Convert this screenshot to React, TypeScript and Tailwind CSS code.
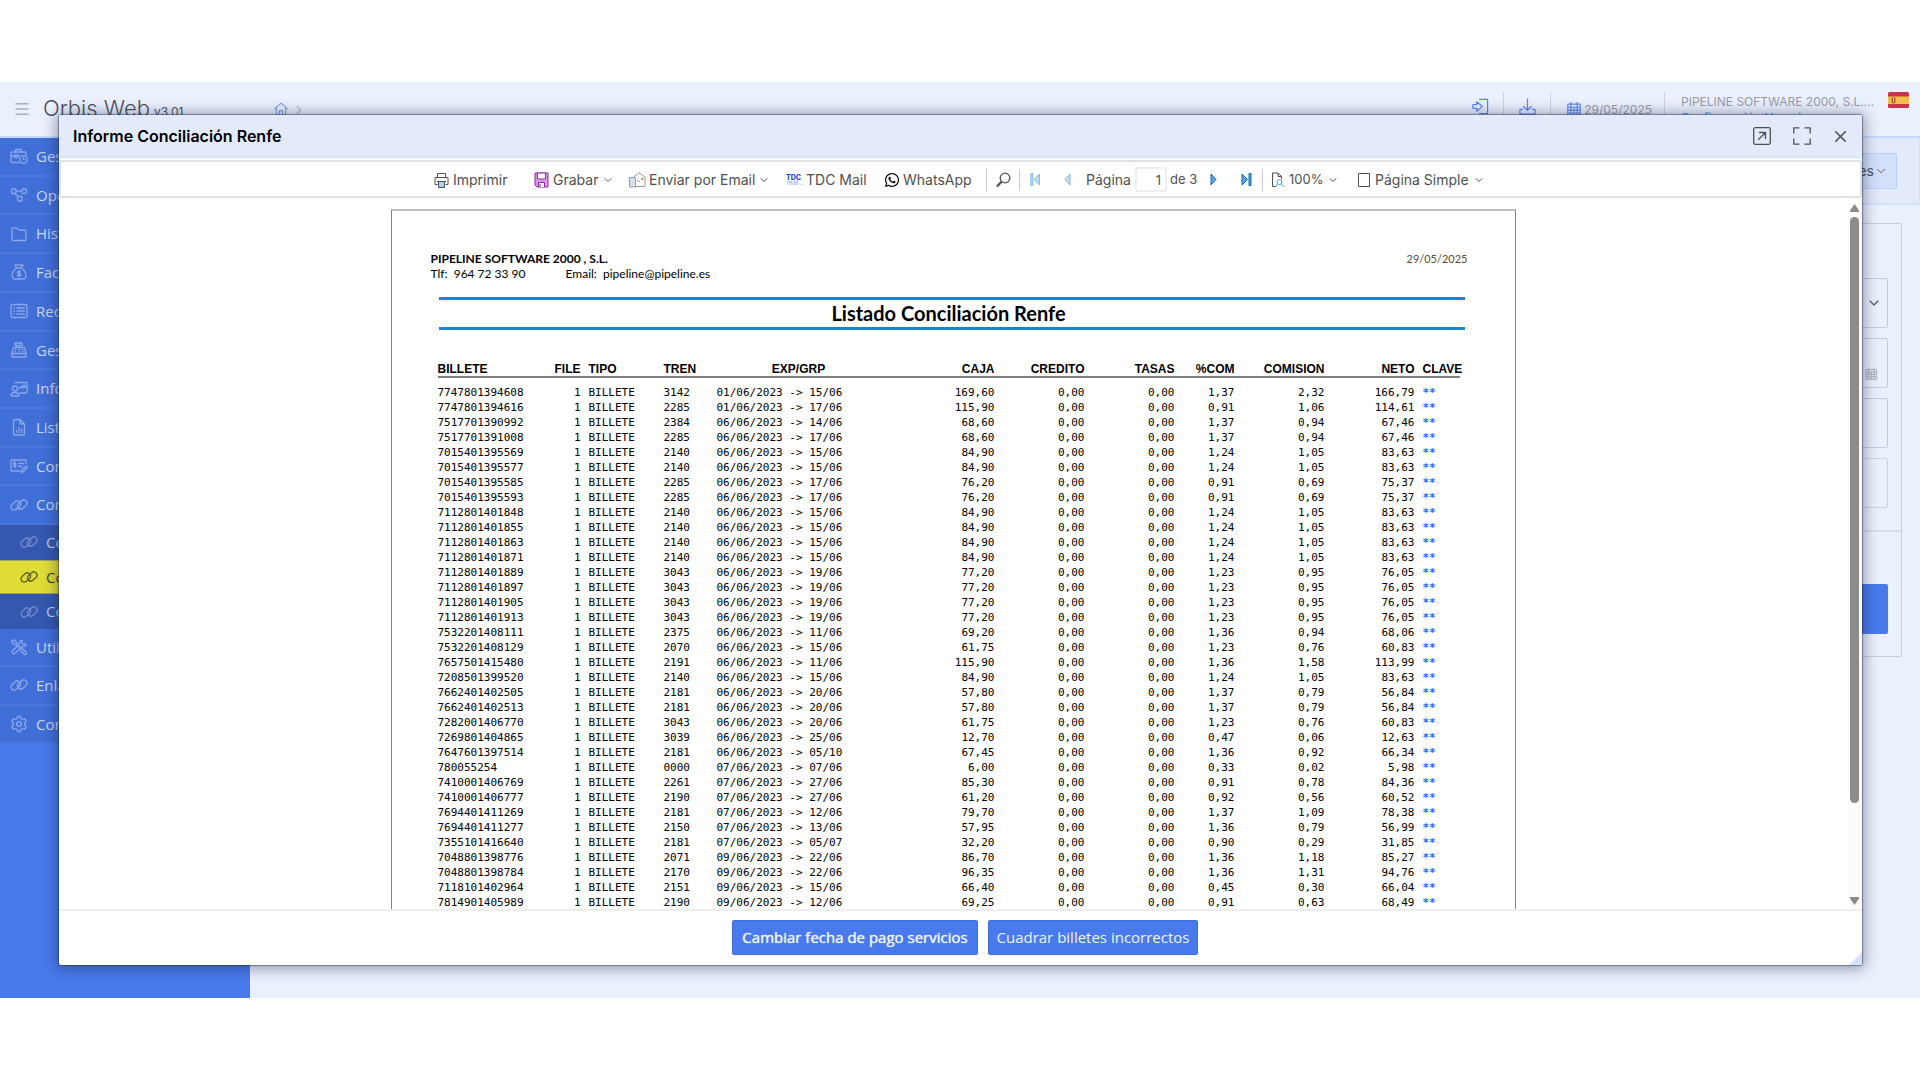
import type { ReactNode } from "react";
import { FaWhatsapp } from "react-icons/fa";
import { ChevronDown, ChevronRight, Menu, X } from "lucide-react";

/* ---------- iconos ---------- */

function Icon({ children, size = 18, className = "" }: { children: ReactNode; size?: number; className?: string }) {
  return (
    <svg
      width={size}
      height={size}
      viewBox="0 0 18 18"
      fill="none"
      stroke="currentColor"
      strokeWidth="1.3"
      strokeLinecap="round"
      strokeLinejoin="round"
      className={`shrink-0 ${className}`}
    >
      {children}
    </svg>
  );
}

const icons = {
  briefcase: (
    <>
      <path d="M9 15.5H2a1 1 0 0 1-1-1V6a1 1 0 0 1 1-1h13a1 1 0 0 1 1 1v2" />
      <path d="M5.5 5V3.5a1 1 0 0 1 1-1h4a1 1 0 0 1 1 1V5M1 9h4M8 9h2M5 8v2.500h2.500V8z" />
      <circle cx="13.5" cy="12.5" r="3.8" />
      <path d="M13.5 10.500v2.200h1.500" />
    </>
  ),
  nodes: (
    <>
      <rect x="1.5" y="3" width="4.5" height="4.5" rx="1" />
      <rect x="12" y="3" width="4.5" height="4.5" rx="1" />
      <rect x="7.5" y="10.5" width="4.5" height="4.5" rx="1" />
      <path d="M6 5.200h6M5 7.500l3 3" />
    </>
  ),
  folder: <path d="M2 4a1 1 0 0 1 1-1h4l2 2h6a1 1 0 0 1 1 1v8.500a1 1 0 0 1-1 1H3a1 1 0 0 1-1-1z" />,
  moneyBag: (
    <>
      <path d="M6.5 5 5 2h8l-1.500 3zM6.500 5C4 7 2 9.500 2 12.500 2 15 3.500 16 5.500 16h7c2 0 3.500-1 3.500-3.500C16 9.500 14 7 11.500 5z" />
      <path d="M10.7 9c-1-1-3.200-.8-3.200.5 0 1.500 3.300.8 3.300 2.300 0 1.300-2.400 1.500-3.400.4M9 7.700v6" />
    </>
  ),
  list: (
    <>
      <rect x="1" y="2.5" width="16" height="13" rx="1.5" />
      <path d="M7 6h7.500M7 9h7.500M7 12h7.500M4 6h.5M4 9h.5M4 12h.5" />
    </>
  ),
  register: (
    <>
      <path d="M2 12l1.500-5.500h11L16 12v4H2zM2 12.500h14M5 2h7v2.500H5zM7 4.500v2" />
      <path d="M5.5 8.500h.5M9 8.500h.5M12 8.500h.5M5 10.500h.5M9 10.500h.5M12.500 10.500h.5" />
    </>
  ),
  presenter: (
    <>
      <path d="M5 2.500h11a1 1 0 0 1 1 1V12a1 1 0 0 1-1 1H10" />
      <circle cx="5" cy="8.5" r="2.5" />
      <path d="M1 16c0-2.500 2-3.500 4-3.500s4 1 4 3.500zM9 8.500l2-2 1.500 1.500L15 5.500M12.800 5.500H15v2" />
    </>
  ),
  report: (
    <>
      <path d="M3.5 2.500a1 1 0 0 1 1-1H10l4.500 4.500v10a1 1 0 0 1-1 1h-9a1 1 0 0 1-1-1zM10 1.500V6h4.500" />
      <path d="M6.5 14.500v-2M9 14.500v-5M11.700 14.500V11" />
    </>
  ),
  cheque: (
    <>
      <path d="M10 14H2a1 1 0 0 1-1-1V4a1 1 0 0 1 1-1h13a1 1 0 0 1 1 1v2.500" />
      <path d="M5.800 6c-1-.7-2.300-.4-2.300.5 0 1.200 2.500.7 2.500 2s-1.600 1.300-2.500.6M4.700 5v5.500M8.500 6.500h5M8.500 9.500H12M11.500 15.500l.5-2.500 4-4 1.500 1.500-4 4z" />
    </>
  ),
  link: (
    <>
      <rect x="0.5" y="6.3" width="10.5" height="6.4" rx="3.2" transform="rotate(-42 5.8 9.5)" />
      <rect x="7" y="5.3" width="10.5" height="6.4" rx="3.2" transform="rotate(-42 12.3 8.5)" />
    </>
  ),
  tools: (
    <>
      <path d="M2 2.500 4 2l3 3-.5 1.500 5 5 1.500-.5 3.300 3.300c.8 1.200-.8 2.700-2 2L11 13l.5-1.500-5-5L5 7 2 4.500z" />
      <path d="M15.500 5.500 13.500 6.500l-1.800-1.700L12.500 2.500C10.500 2 8.800 4 9.500 6L2.500 12.700c-1.500 1.600.8 4 2.500 2.500L12 8.500c2.500.7 4.500-1 3.500-3z" />
    </>
  ),
  gear: (
    <>
      <path d="M7.500 1.500h3l.5 2 1.700 1 2-.6 1.500 2.600-1.500 1.500v2l1.500 1.500-1.500 2.600-2-.6-1.700 1-.5 2h-3l-.5-2-1.700-1-2 .6-1.500-2.600L3.300 10V8L1.800 6.500l1.500-2.600 2 .6 1.700-1z" />
      <circle cx="9" cy="9" r="2.3" />
    </>
  ),
  calendar: <path d="M2 3.500h14V17H2zM2 7h14M2 10.200h14M2 13.500h14M5.500 1.500v15.500M9 7v10M12.500 1.500v15.500" />,
};

type IconName = keyof typeof icons;

function TDCIcon() {
  return (
    <svg width="17" height="16" viewBox="0 0 17 16" className="shrink-0">
      <text x="0" y="8" fontSize="7" fontWeight="800" fontFamily="Inter, sans-serif" fill="#2446d8">
        TDC
      </text>
      <text x="1" y="13" fontSize="6" fontFamily="Inter, sans-serif" fill="#8a9bf0">
        mail
      </text>
      <circle cx="15.5" cy="12.500" r="0.7" fill="#f1c232" />
    </svg>
  );
}

function SpainFlag() {
  return (
    <svg width="21" height="16" viewBox="0 0 21 16" className="shrink-0">
      <rect width="21" height="16" rx="1.5" fill="#c8324a" />
      <rect y="4.5" width="21" height="7.5" fill="#f3bf4b" />
      <path d="M3.500 5.500h4v4a2 2 0 0 1-4 0z" fill="#b5533c" />
      <path d="M5.500 5.500v5" stroke="#f3d9a0" strokeWidth="0.8" />
    </svg>
  );
}

/* ---------- menú lateral ---------- */

type MenuItem = { icon: IconName; label: string };

const mainMenu: MenuItem[] = [
  { icon: "briefcase", label: "Gestión" },
  { icon: "nodes", label: "Operaciones" },
  { icon: "folder", label: "Histórico" },
  { icon: "moneyBag", label: "Facturación" },
  { icon: "list", label: "Recibos" },
  { icon: "register", label: "Gestión Caja" },
  { icon: "presenter", label: "Informes" },
  { icon: "report", label: "Listados" },
  { icon: "cheque", label: "Contabilidad" },
  { icon: "link", label: "Conciliación" },
];

const subMenu = [
  { label: "Conciliación BSP", active: false },
  { label: "Conciliación Renfe", active: true },
  { label: "Conciliación Hotel", active: false },
];

const bottomMenu: MenuItem[] = [
  { icon: "tools", label: "Utilidades" },
  { icon: "link", label: "Enlaces" },
  { icon: "gear", label: "Configuración" },
];

function MenuRow({ item }: { item: MenuItem }) {
  return (
    <a href="#" className="flex items-center gap-2 border-b-2 border-[#4c77db] bg-[#416fd8] pl-[10px] text-[#c9d6f5]">
      <Icon className="text-[#8aa7ea]">{icons[item.icon]}</Icon>
      {item.label}
    </a>
  );
}

function Sidebar() {
  return (
    <nav className="w-[250px] shrink-0 bg-[#487aec] text-[15px] font-['Open_Sans',sans-serif]">
      <div className="grid h-[387px] auto-rows-fr">
        {mainMenu.map((item) => (
          <MenuRow key={item.label} item={item} />
        ))}
      </div>
      <div className="grid h-[104px] auto-rows-fr">
        {subMenu.map((item) => (
          <a
            key={item.label}
            href="#"
            className={
              item.active
                ? "flex items-center gap-2 border-y border-[#9aa56a] bg-[#dfdd35] pl-5 text-[#3d4424]"
                : "flex items-center gap-2 bg-[#3458ae] pl-5 text-[#bccaee]"
            }
          >
            <Icon className={item.active ? "text-[#5a602a]" : "text-[#6f8cd0]"}>{icons.link}</Icon>
            {item.label}
          </a>
        ))}
      </div>
      <div className="grid h-[115px] auto-rows-fr">
        {bottomMenu.map((item) => (
          <MenuRow key={item.label} item={item} />
        ))}
      </div>
    </nav>
  );
}

/* ---------- cabecera ---------- */

function Header() {
  return (
    <header className="flex h-[56px] items-start border-b-2 border-[#c7d8fb] pl-[13px] pr-[11px]">
      <button className="mt-[18px] text-[#a9aebc]" aria-label="Menú">
        <Menu size={18} strokeWidth={2} />
      </button>
      <div className="ml-3 mt-[10px] flex w-[231px] items-baseline gap-1 text-[#4b5060]">
        <span className="text-[22px] leading-8 font-light">Orbis Web</span>
        <span className="text-[12px]">v3.01</span>
      </div>
      <a href="#" className="mt-5 text-[#7d9ff0]" aria-label="Inicio">
        <Icon size={14}>
          <path d="M1 8.500 9 1.500l8 7M3 7v10h4v-6h4v6h4V7" strokeWidth="1.5" />
        </Icon>
      </a>
      <ChevronRight size={14} className="ml-1 mt-[21px] text-[#b3b8c6]" />

      <div className="ml-auto flex items-start text-[#5b87ee]">
        <button className="mr-[14px] mt-4" aria-label="Entrar">
          <Icon size={17}>
            <path d="M8 1.500h8.500v15H8M1 7h4V4l6 5-6 5v-3H1z" />
          </Icon>
        </button>
        <div className="mt-[10px] h-10 w-px bg-[#d0d4de]" />
        <button className="ml-[15px] mr-[14px] mt-4" aria-label="Descargar">
          <Icon size={17}>
            <path d="M9 1v12M5 9l4 4 4-4M4 12H1v5h16v-5h-3" />
          </Icon>
        </button>
        <div className="mt-[10px] h-10 w-px bg-[#d0d4de]" />
        <div className="mt-4 flex items-center gap-[2px] pl-[15px] pr-3">
          <Icon size={16}>{icons.calendar}</Icon>
          <span className="pt-[2px] text-[12px] leading-5 text-[#969ba8]">29/05/2025</span>
        </div>
        <div className="mt-[10px] h-10 w-px bg-[#d0d4de]" />
        <div className="ml-4 mt-3 w-[207px] whitespace-nowrap text-[12px] leading-4">
          <div className="text-[#969ba8]">PIPELINE SOFTWARE 2000, S.L....</div>
          <a href="#">Configuración Usuario</a>
        </div>
        <div className="mt-[10px]">
          <SpainFlag />
        </div>
      </div>
    </header>
  );
}

/* ---------- formulario de fondo ---------- */

function Background() {
  return (
    <main className="min-w-0 flex-1">
      <div className="flex h-[67px] items-center justify-end border-b-2 border-r border-[#d3e0fb] bg-[#e3eafc] pr-[22px]">
        <button className="flex h-[36px] items-center rounded-[2px] border border-[#b9cef9] bg-[#d4e0f9] pl-3 pr-2 text-[14px] text-[#4b5060]">
          Opciones
          <ChevronDown size={14} strokeWidth={1.5} />
        </button>
      </div>
      <div className="ml-5 mr-[18px] mt-[18px] rounded-[2px] border border-[#c9cedb]">
        <div className="flex flex-col gap-[10px] border-b-2 border-[#d9deea] pb-[22px] pl-5 pr-[13px] pt-[54px]">
          <div className="flex h-[50px] items-center justify-end rounded-[2px] border border-[#c3cbdd] pr-[5px] text-[#5b6070]">
            <ChevronDown size={16} strokeWidth={2} />
          </div>
          <div className="flex h-[50px] items-center justify-end rounded-[2px] border border-[#c3cbdd] pr-[9px] pt-[20px] text-[#a9aebc]">
            <Icon size={13}>{icons.calendar}</Icon>
          </div>
          <div className="h-[50px] rounded-[2px] border border-[#c3cbdd]" />
          <div className="h-[50px] rounded-[2px] border border-[#ccd1dd]" />
        </div>
        <div className="pb-[22px] pl-5 pr-[13px] pt-[52px]">
          <div className="h-[50px] rounded-[2px] bg-[#487aec]" />
        </div>
      </div>
    </main>
  );
}

/* ---------- informe ---------- */

// billete, tren, salida, vuelta, caja, %com, comisión, neto
const billetes = [
  ["7747801394608", "3142", "01/06/2023", "15/06", "169,60", "1,37", "2,32", "166,79"],
  ["7747801394616", "2285", "01/06/2023", "17/06", "115,90", "0,91", "1,06", "114,61"],
  ["7517701390992", "2384", "06/06/2023", "14/06", "68,60", "1,37", "0,94", "67,46"],
  ["7517701391008", "2285", "06/06/2023", "17/06", "68,60", "1,37", "0,94", "67,46"],
  ["7015401395569", "2140", "06/06/2023", "15/06", "84,90", "1,24", "1,05", "83,63"],
  ["7015401395577", "2140", "06/06/2023", "15/06", "84,90", "1,24", "1,05", "83,63"],
  ["7015401395585", "2285", "06/06/2023", "17/06", "76,20", "0,91", "0,69", "75,37"],
  ["7015401395593", "2285", "06/06/2023", "17/06", "76,20", "0,91", "0,69", "75,37"],
  ["7112801401848", "2140", "06/06/2023", "15/06", "84,90", "1,24", "1,05", "83,63"],
  ["7112801401855", "2140", "06/06/2023", "15/06", "84,90", "1,24", "1,05", "83,63"],
  ["7112801401863", "2140", "06/06/2023", "15/06", "84,90", "1,24", "1,05", "83,63"],
  ["7112801401871", "2140", "06/06/2023", "15/06", "84,90", "1,24", "1,05", "83,63"],
  ["7112801401889", "3043", "06/06/2023", "19/06", "77,20", "1,23", "0,95", "76,05"],
  ["7112801401897", "3043", "06/06/2023", "19/06", "77,20", "1,23", "0,95", "76,05"],
  ["7112801401905", "3043", "06/06/2023", "19/06", "77,20", "1,23", "0,95", "76,05"],
  ["7112801401913", "3043", "06/06/2023", "19/06", "77,20", "1,23", "0,95", "76,05"],
  ["7532201408111", "2375", "06/06/2023", "11/06", "69,20", "1,36", "0,94", "68,06"],
  ["7532201408129", "2070", "06/06/2023", "15/06", "61,75", "1,23", "0,76", "60,83"],
  ["7657501415480", "2191", "06/06/2023", "11/06", "115,90", "1,36", "1,58", "113,99"],
  ["7208501399520", "2140", "06/06/2023", "15/06", "84,90", "1,24", "1,05", "83,63"],
  ["7662401402505", "2181", "06/06/2023", "20/06", "57,80", "1,37", "0,79", "56,84"],
  ["7662401402513", "2181", "06/06/2023", "20/06", "57,80", "1,37", "0,79", "56,84"],
  ["7282001406770", "3043", "06/06/2023", "20/06", "61,75", "1,23", "0,76", "60,83"],
  ["7269801404865", "3039", "06/06/2023", "25/06", "12,70", "0,47", "0,06", "12,63"],
  ["7647601397514", "2181", "06/06/2023", "05/10", "67,45", "1,36", "0,92", "66,34"],
  ["780055254", "0000", "07/06/2023", "07/06", "6,00", "0,33", "0,02", "5,98"],
  ["7410001406769", "2261", "07/06/2023", "27/06", "85,30", "0,91", "0,78", "84,36"],
  ["7410001406777", "2190", "07/06/2023", "27/06", "61,20", "0,92", "0,56", "60,52"],
  ["7694401411269", "2181", "07/06/2023", "12/06", "79,70", "1,37", "1,09", "78,38"],
  ["7694401411277", "2150", "07/06/2023", "13/06", "57,95", "1,36", "0,79", "56,99"],
  ["7355101416640", "2181", "07/06/2023", "05/07", "32,20", "0,90", "0,29", "31,85"],
  ["7048801398776", "2071", "09/06/2023", "22/06", "86,70", "1,36", "1,18", "85,27"],
  ["7048801398784", "2170", "09/06/2023", "22/06", "96,35", "1,36", "1,31", "94,76"],
  ["7118101402964", "2151", "09/06/2023", "15/06", "66,40", "0,45", "0,30", "66,04"],
  ["7814901405989", "2190", "09/06/2023", "12/06", "69,25", "0,91", "0,63", "68,49"],
];

const columns = [
  { label: "BILLETE", className: "w-[102px] text-left" },
  { label: "FILE", className: "w-[41px] text-right" },
  { label: "TIPO", className: "w-[83px] pl-2 text-left" },
  { label: "TREN", className: "w-[53px] text-left" },
  { label: "EXP/GRP", className: "w-[164px] text-center" },
  { label: "CAJA", className: "w-[114px] text-right" },
  { label: "CREDITO", className: "w-[90px] text-right" },
  { label: "TASAS", className: "w-[90px] text-right" },
  { label: "%COM", className: "w-[60px] text-right" },
  { label: "COMISION", className: "w-[90px] text-right" },
  { label: "NETO", className: "w-[90px] text-right" },
  { label: "CLAVE", className: "w-[45px] pl-2 text-left" },
];

function Report() {
  return (
    <article className="w-[1125px] border-x border-t-2 border-x-[#808080] border-t-[#bfbfbf] bg-white px-[39px] pt-[40px] font-['Lato',sans-serif] text-black">
      <div className="flex justify-between pr-2 text-[12px] leading-[15px]">
        <div>
          <div className="font-bold">PIPELINE SOFTWARE 2000 , S.L.</div>
          <div className="flex gap-10">
            <span>Tlf:&nbsp; 964 72 33 90</span>
            <span>Email:&nbsp; pipeline@pipeline.es</span>
          </div>
        </div>
        <div className="text-[11px] text-[#5c4a35]">29/05/2025</div>
      </div>
      <h1 className="ml-2 mr-[11px] mt-4 h-[33px] border-y-[3px] border-[#1b84ca] pr-[6px] text-center text-[20px] leading-[26px] font-bold">
        Listado Conciliación Renfe
      </h1>

      <table className="ml-[7px] mt-8 w-[1022px] table-fixed border-separate border-spacing-0 whitespace-nowrap">
        <thead className="text-[12px] leading-[14px] font-['Liberation_Sans',sans-serif]">
          <tr>
            {columns.map((c) => (
              <th key={c.label} className={`border-b-2 border-[#808080] p-0 font-bold ${c.className}`}>
                {c.label}
              </th>
            ))}
          </tr>
        </thead>
        <tbody className="text-[11px] leading-[15px] font-['DejaVu_Sans_Mono',monospace] before:block before:h-[7px]">
          {billetes.map(([billete, tren, salida, vuelta, caja, com, comision, neto]) => (
            <tr key={billete}>
              <td>{billete}</td>
              <td className="text-right">1</td>
              <td className="pl-2">BILLETE</td>
              <td>{tren}</td>
              <td>
                {salida} -&gt; {vuelta}
              </td>
              <td className="text-right">{caja}</td>
              <td className="text-right">0,00</td>
              <td className="text-right">0,00</td>
              <td className="text-right">{com}</td>
              <td className="text-right">{comision}</td>
              <td className="text-right">{neto}</td>
              <td className="pl-2 font-bold text-[#2f62ff]">**</td>
            </tr>
          ))}
        </tbody>
      </table>
    </article>
  );
}

/* ---------- barra del visor ---------- */

function Separator() {
  return <div className="h-[22px] w-px shrink-0 bg-[#c9c9c9]" />;
}

function Toolbar() {
  return (
    <div className="mt-[2px] flex h-[38px] shrink-0 items-center justify-center rounded-[3px] border-2 border-[#e1e1e1] bg-white pt-px text-[14px] whitespace-nowrap text-[#505050]">
      <button className="flex w-[100px] items-center gap-1 pl-1">
        <svg width="15" height="16" viewBox="0 0 15 16" fill="none" stroke="#505050" className="shrink-0">
          <path d="M3.500 5V1.500h8V5M3.500 12.500h-2.500v-7h13v7h-2.500" />
          <path d="M4.500 9.500h6v6h-6z" fill="#a9d3ee" />
          <path d="M3 9.500h9" />
        </svg>
        Imprimir
      </button>
      <button className="flex w-[95px] items-center gap-1 pl-1">
        <svg width="15" height="16" viewBox="0 0 15 16" stroke="#8f2aa5" className="shrink-0">
          <path d="M1 1h13v14H3l-2-2z" fill="#d79be2" />
          <path d="M3.500 1h8v6h-8zM4.500 15v-4.500h6V15" fill="#fff" />
          <path d="M6 12v3" />
        </svg>
        Grabar
        <ChevronDown size={12} />
      </button>
      <button className="flex w-[157px] items-center gap-[3px] pl-1">
        <svg width="17" height="16" viewBox="0 0 17 16" fill="none" stroke="#9a9a9a" className="shrink-0">
          <path d="M4.500 5 10 .8 16 5v9.500H7" />
          <path d="M.5 5.500h6v9.500h-6z" fill="#cfe3f1" />
          <path d="M8 8l3 2" />
          <path d="M12.500 6h1.500v2h-1.500z" fill="#e0523f" stroke="none" />
        </svg>
        Enviar por Email
        <ChevronDown size={12} />
      </button>
      <button className="flex w-[98px] items-center gap-[3px] pl-1">
        <TDCIcon />
        TDC Mail
      </button>
      <button className="flex w-[106px] items-center gap-[3px] pl-1">
        <FaWhatsapp size={16} className="shrink-0 text-black" />
        WhatsApp
      </button>
      <Separator />
      <button className="flex w-[32px] justify-center" aria-label="Buscar">
        <svg width="15" height="16" viewBox="0 0 15 16" fill="none" stroke="#505050" className="shrink-0">
          <circle cx="9" cy="6" r="4.8" strokeWidth="1.3" />
          <path d="M5.500 9.800 1 14.500" strokeWidth="2.3" />
        </svg>
      </button>
      <Separator />
      <button className="flex w-[34px] pl-[10px]" aria-label="Primera página">
        <svg width="11" height="13" viewBox="0 0 11 13" fill="#bcdcf2" stroke="#85b9e0">
          <path d="M.8.500h2v12h-2zM9.500 1v11L4 6.500z" />
        </svg>
      </button>
      <button className="flex w-[32px] pl-[10px]" aria-label="Página anterior">
        <svg width="7" height="13" viewBox="0 0 7 13" fill="#bcdcf2" stroke="#85b9e0">
          <path d="M6 1v11L1 6.500z" />
        </svg>
      </button>
      <label htmlFor="pagina" className="w-[49px]">
        Página
      </label>
      <input
        id="pagina"
        defaultValue="1"
        className="h-[25px] w-[32px] rounded-[3px] border-2 border-[#eeeeee] pr-1 text-right text-[13px]"
      />
      <span className="w-[36px] pl-[3px] text-[13px]">de 3</span>
      <button className="flex w-[34px] pl-[7px]" aria-label="Página siguiente">
        <svg width="7" height="13" viewBox="0 0 7 13" fill="#5ba9e0" stroke="#0f6cb8">
          <path d="M1 1v11l5-5.500z" />
        </svg>
      </button>
      <button className="flex w-[25px] pl-1" aria-label="Última página">
        <svg width="11" height="13" viewBox="0 0 11 13" fill="#5ba9e0" stroke="#0f6cb8">
          <path d="M8 .5h2v12H8zM1 1v11l5.500-5.500z" />
        </svg>
      </button>
      <Separator />
      <button className="flex w-[90px] items-center gap-1 pl-2 text-[13px]">
        <svg width="14" height="16" viewBox="0 0 14 16" fill="none" stroke="#505050" className="shrink-0">
          <path d="M5 14.500H1.500V1H7l3.500 3.500V7M7 1v3.500h3.500" />
          <circle cx="8.5" cy="10" r="2.5" stroke="#4a9fd8" />
          <path d="m10.500 12 2.500 3M6.500 12 5 14.500" stroke="#4a9fd8" />
        </svg>
        100%
        <ChevronDown size={12} />
      </button>
      <button className="flex w-[138px] items-center gap-1 pl-1">
        <svg width="14" height="16" viewBox="0 0 14 16" fill="none" stroke="#505050" className="shrink-0">
          <path d="M1.500 1.500h11v13h-11z" />
        </svg>
        <span>Página Simple</span>
        <ChevronDown size={12} />
      </button>
    </div>
  );
}

/* ---------- ventana modal ---------- */

function ReportDialog() {
  return (
    <section
      role="dialog"
      aria-labelledby="dialog-title"
      className="relative flex w-full flex-col rounded-[2px] bg-white shadow-[0_0_1px_1px_rgba(30,40,80,0.45),0_1px_14px_3px_rgba(20,30,60,0.4)]"
    >
      <div className="flex h-[43px] shrink-0 items-center border-b border-[#d0dffb] bg-[#e3eafc] pl-[14px] pr-3 text-[#505050]">
        <h2 id="dialog-title" className="flex-1 text-[16px] font-semibold text-black">
          Informe Conciliación Renfe
        </h2>
        <button className="mr-[22px]" aria-label="Abrir en ventana nueva">
          <Icon>
            <rect x="0.7" y="0.7" width="16.6" height="16.6" rx="1.5" />
            <path d="M5.500 12.500 12 6M6.500 5.500H12.500V11.500" />
          </Icon>
        </button>
        <button className="mr-5" aria-label="Maximizar">
          <Icon>
            <path d="M.8 6V.8H6M12 .8h5.200V6M17.200 12v5.200H12M6 17.200H.8V12" />
          </Icon>
        </button>
        <button aria-label="Cerrar">
          <X size={19} strokeWidth={2} />
        </button>
      </div>

      <Toolbar />

      <div className="flex min-h-0 flex-1">
        <div className="flex flex-1 items-start justify-center overflow-hidden pt-[11px]">
          <Report />
        </div>
        <div className="flex w-[15px] flex-col items-center bg-[#fcfcfc] pt-[6px] pb-1 text-[#8b8b8b]">
          <svg width="9" height="8" viewBox="0 0 9 8" fill="currentColor">
            <path d="M4.500 0 9 6.500V8H0V6.500z" />
          </svg>
          <div className="mt-[5px] h-[586px] w-[9px] rounded-full bg-[#8b8b8b]" />
          <svg width="9" height="8" viewBox="0 0 9 8" fill="currentColor" className="mt-auto">
            <path d="M4.500 8 9 1.500V0H0v1.500z" />
          </svg>
        </div>
      </div>

      <div className="flex h-[56px] shrink-0 items-start justify-center gap-[10px] border-t-2 border-[#eeeeee] pt-[9px] pl-[9px] text-[15px] font-['Open_Sans',sans-serif] text-[#eef3ff]">
        <button className="h-[35px] w-[246px] rounded-[2px] border border-[#3f6fdf] bg-[#487aec] pb-px font-medium whitespace-nowrap [text-shadow:0_0_1px_white]">
          Cambiar fecha de pago servicios
        </button>
        <button className="h-[35px] w-[210px] rounded-[2px] border border-[#3f6fdf] bg-[#487aec] pb-px whitespace-nowrap">
          Cuadrar billetes incorrectos
        </button>
      </div>
      <svg width="13" height="13" viewBox="0 0 13 13" className="absolute right-0 bottom-0">
        <path d="M13 0v13H0z" fill="#d6e1fb" />
      </svg>
    </section>
  );
}

export default function App() {
  return (
    <div className="flex min-h-screen flex-col bg-white py-[82px] font-['Inter',sans-serif]">
      <div className="relative flex flex-1 flex-col overflow-hidden bg-[#ebf0fd]">
        <Header />
        <div className="flex flex-1">
          <Sidebar />
          <Background />
        </div>
        <div className="absolute inset-0 flex pt-[33px] pr-[58px] pb-[33px] pl-[59px]">
          <ReportDialog />
        </div>
      </div>
    </div>
  );
}
